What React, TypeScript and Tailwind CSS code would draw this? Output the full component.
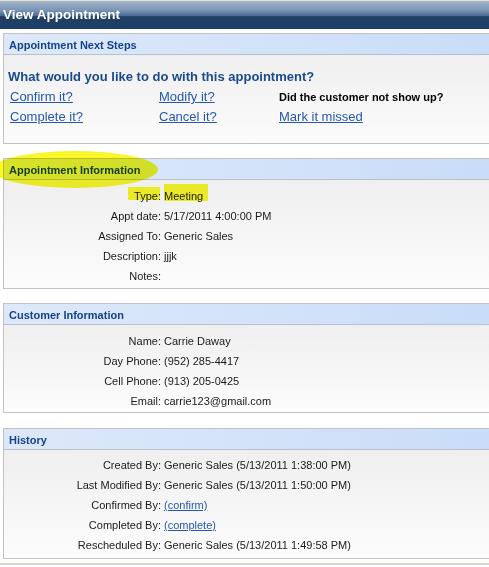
const apptRows = [
  { label: "Type:", value: "Meeting" },
  { label: "Appt date:", value: "5/17/2011 4:00:00 PM" },
  { label: "Assigned To:", value: "Generic Sales" },
  { label: "Description:", value: "jjjk" },
  { label: "Notes:", value: "" },
];

const customerRows = [
  { label: "Name:", value: "Carrie Daway" },
  { label: "Day Phone:", value: "(952) 285-4417" },
  { label: "Cell Phone:", value: "(913) 205-0425" },
  { label: "Email:", value: "carrie123@gmail.com" },
];

const historyRows = [
  { label: "Created By:", value: "Generic Sales (5/13/2011 1:38:00 PM)" },
  { label: "Last Modified By:", value: "Generic Sales (5/13/2011 1:50:00 PM)" },
  { label: "Confirmed By:", value: "(confirm)", link: true },
  { label: "Completed By:", value: "(complete)", link: true },
  { label: "Rescheduled By:", value: "Generic Sales (5/13/2011 1:49:58 PM)" },
];

type Row = { label: string; value: string; link?: boolean };

function Panel({ title, className, children }: { title: string; className?: string; children: React.ReactNode }) {
  return (
    <section className={`ml-[3px] w-[520px] border border-[#c2c2c2] ${className ?? ""}`}>
      <div className="flex h-[21px] items-center border-b border-[#b9bfcb] bg-gradient-to-r from-[#dde9fa] to-[#c8dcf8] pl-[5px] pt-[2px] text-[11px] font-bold text-[#15428b]">
        {title}
      </div>
      <div className="bg-gradient-to-b from-[#efefef] to-[#fcfcfc]">{children}</div>
    </section>
  );
}

function InfoRows({ rows }: { rows: Row[] }) {
  return (
    <div className="flex flex-col">
      {rows.map((row) => (
        <div className="flex h-[20px] items-center text-[11px] text-[#1a1a1a]" key={row.label}>
          <span className="w-[157px] text-right">{row.label}</span>
          <span className="pl-[3px]">
            {row.link ? (
              <a className="text-[#2458b0] underline" href="#">
                {row.value}
              </a>
            ) : (
              row.value
            )}
          </span>
        </div>
      ))}
    </div>
  );
}

export default function App() {
  return (
    <div className="relative h-[567px] w-[489px] overflow-hidden bg-white font-['Liberation_Sans',Arial,sans-serif]">
      <div className="h-px bg-[#e6e2c9]" />
      <div className="flex h-[28px] items-center bg-[linear-gradient(to_bottom,#a3b6cd_0%,#7892b3_35%,#4c6b92_52%,#213f63_56%,#1b3f69_100%)] pl-[3px] pt-[1px] text-[13.5px] font-bold text-white">
        View Appointment
      </div>

      <Panel className="mt-[4px]" title="Appointment Next Steps">
        <div className="h-[88px] pl-[4px] pt-[14px]">
          <div className="text-[13px] leading-[16px] font-bold text-[#1a4a8c]">
            What would you like to do with this appointment?
          </div>
          <div className="mt-[2px] grid grid-cols-[149px_120px_1fr] pl-[2px] text-[13px]">
            <a className="flex h-[20px] items-center text-[#2458b0] underline" href="#">
              Confirm it?
            </a>
            <a className="flex h-[20px] items-center text-[#2458b0] underline" href="#">
              Modify it?
            </a>
            <span className="flex h-[20px] items-center text-[11px] font-bold text-black">
              Did the customer not show up?
            </span>
            <a className="flex h-[20px] items-center text-[#2458b0] underline" href="#">
              Complete it?
            </a>
            <a className="flex h-[20px] items-center text-[#2458b0] underline" href="#">
              Cancel it?
            </a>
            <a className="flex h-[20px] items-center text-[#2458b0] underline" href="#">
              Mark it missed
            </a>
          </div>
        </div>
      </Panel>

      <Panel className="mt-[14px]" title="Appointment Information">
        <div className="h-[108px] pt-[6px]">
          <InfoRows rows={apptRows} />
        </div>
      </Panel>

      <Panel className="mt-[14px]" title="Customer Information">
        <div className="h-[87px] pt-[6px]">
          <InfoRows rows={customerRows} />
        </div>
      </Panel>

      <Panel className="mt-[15px]" title="History">
        <div className="h-[108px] pt-[5px]">
          <InfoRows rows={historyRows} />
        </div>
      </Panel>

      <div className="absolute left-0 top-[563px] h-[2px] w-full bg-[#dcd8c4]" />

      {/* highlighter marks */}
      <div className="pointer-events-none absolute left-[-8px] top-[151px] h-[37px] w-[166px] rounded-[50%] bg-[#f8f82a] mix-blend-multiply" />
      <div className="pointer-events-none absolute left-[128px] top-[187px] h-[13px] w-[32px] bg-[#f8f82a] mix-blend-multiply" />
      <div className="pointer-events-none absolute left-[164px] top-[184px] h-[17px] w-[44px] bg-[#f8f82a] mix-blend-multiply" />
    </div>
  );
}
